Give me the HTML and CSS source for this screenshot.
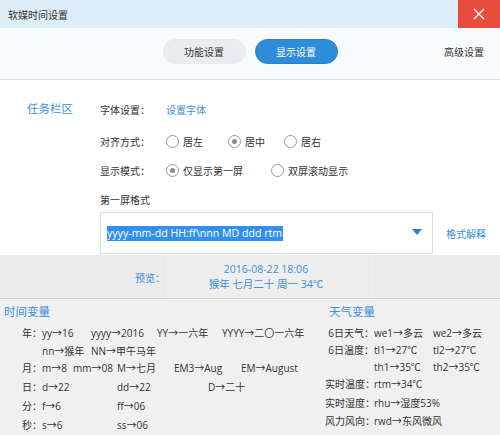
FILE: index.html
```html
<!DOCTYPE html>
<html lang="zh-CN">
<head>
<meta charset="utf-8">
<title>软媒时间设置</title>
<link rel="stylesheet" href="styles.css">
</head>
<body>
<div class="win">
  <header class="titlebar">
    <span class="title">软媒时间设置</span>
    <button class="close" aria-label="关闭">
      <svg width="12" height="12" viewBox="0 0 12 12"><path d="M1 1L11 11M11 1L1 11" stroke="#fff" stroke-width="1.3" fill="none"/></svg>
    </button>
  </header>

  <nav class="tabs">
    <div class="tabs-spacer"></div>
    <div class="pills">
      <span class="pill">功能设置</span>
      <span class="pill active">显示设置</span>
    </div>
    <div class="tabs-right"><span class="tab-text">高级设置</span></div>
  </nav>

  <section class="main">
    <div class="side">任务栏区</div>
    <div class="form">
      <div class="row r1">
        <span class="label">字体设置：</span>
        <span class="link">设置字体</span>
      </div>
      <div class="row r2">
        <span class="label">对齐方式：</span>
        <span class="opt o62"><i class="radio"></i>居左</span>
        <span class="opt o56"><i class="radio on"></i>居中</span>
        <span class="opt"><i class="radio"></i>居右</span>
      </div>
      <div class="row r3">
        <span class="label">显示模式：</span>
        <span class="opt o105"><i class="radio on"></i>仅显示第一屏</span>
        <span class="opt"><i class="radio"></i>双屏滚动显示</span>
      </div>
      <div class="row r4">
        <span class="label">第一屏格式</span>
      </div>
      <div class="fmt-row">
        <div class="select">
          <span class="sel-text">yyyy-mm-dd HH:ff\nnn MD ddd rtm</span>
          <svg class="caret" width="10" height="6" viewBox="0 0 10 6"><path d="M0 0H10L5 6Z" fill="#2b7fd1"/></svg>
        </div>
        <span class="link">格式解释</span>
      </div>
    </div>
  </section>

  <section class="preview">
    <div class="pv-label">预览：</div>
    <div class="pv-box">
      <div>2016-08-22 18:06</div>
      <div>猴年 七月二十 周一 34℃</div>
    </div>
  </section>

  <section class="vars">
    <div class="col time">
      <div class="vtitle">时间变量</div>
      <div class="vrow"><span class="vl">年：</span><span class="w49">yy→16</span><span class="w66">yyyy→2016</span><span class="w65">YY→一六年</span><span>YYYY→二〇一六年</span></div>
      <div class="vrow short"><span class="vl"></span><span class="w49">nn→猴年</span><span>NN→甲午马年</span></div>
      <div class="vrow"><span class="vl">月：</span><span class="w31">m→8</span><span class="w44">mm→08</span><span class="w57">M→七月</span><span class="w67">EM3→Aug</span><span>EM→August</span></div>
      <div class="vrow"><span class="vl">日：</span><span class="w75">d→22</span><span class="w91">dd→22</span><span>D→二十</span></div>
      <div class="vrow"><span class="vl">分：</span><span class="w75">f→6</span><span>ff→06</span></div>
      <div class="vrow"><span class="vl">秒：</span><span class="w75">s→6</span><span>ss→06</span></div>
    </div>
    <div class="col weather">
      <div class="vtitle">天气变量</div>
      <div class="wrow first"><span class="wl">6日天气：</span><span class="w59">we1→多云</span><span>we2→多云</span></div>
      <div class="wrow tight"><span class="wl">6日温度：</span><span class="w59">tl1→27℃</span><span>tl2→27℃</span></div>
      <div class="wrow tight"><span class="wl"></span><span class="w59">th1→35℃</span><span>th2→35℃</span></div>
      <div class="wrow"><span class="wl">实时温度：</span><span>rtm→34℃</span></div>
      <div class="wrow"><span class="wl">实时湿度：</span><span>rhu→湿度53%</span></div>
      <div class="wrow"><span class="wl">风力风向：</span><span>rwd→东风微风</span></div>
    </div>
  </section>
</div>
</body>
</html>
```

FILE: styles.css
```css
* { box-sizing: border-box; }
html, body { margin: 0; padding: 0; }
body {
  width: 500px;
  height: 435px;
  overflow: hidden;
  font-family: "Segoe UI", "Open Sans", "Noto Sans CJK SC", sans-serif;
  font-size: 10px;
  color: #333;
  background: #fff;
}
.win { width: 500px; height: 435px; overflow: hidden; display: flex; flex-direction: column; }

.titlebar {
  height: 28px;
  flex: none;
  background: #deedf7;
  display: flex;
  align-items: center;
  justify-content: space-between;
}
.title { padding-left: 8px; color: #333; }
.close {
  width: 42px; height: 28px; border: 0; padding: 0;
  background: #e84c3d;
  display: flex; align-items: center; justify-content: center;
}

.tabs {
  height: 52px;
  flex: none;
  background: #f8fbfd;
  border-bottom: 1px solid #dde1e4;
  display: grid;
  grid-template-columns: 1fr auto 1fr;
  align-items: center;
}
.pills { display: flex; gap: 9px; padding-bottom: 4px; }
.pill {
  width: 83px; height: 25px;
  border-radius: 13px;
  background: #e8edf2;
  display: flex; align-items: center; justify-content: center;
  color: #333;
}
.pill.active { background: #2d8ddb; color: #fff; border: 1px solid #2a7fc4; }
.tabs-right { display: flex; justify-content: flex-end; padding-right: 16px; padding-bottom: 4px; }

.main { height: 175px; flex: none; display: flex; background: #fff; }
.side { width: 100px; padding: 19px 0 0 27px; line-height: 20px; color: #3a8fd8; font-size: 11.5px; }
.form { flex: 1; }
.row { height: 20px; display: flex; align-items: center; }
.r1 { margin-top: 19px; }
.r2 { margin-top: 12px; }
.r3 { margin-top: 9px; }
.r4 { margin-top: 9px; }
.label { width: 66px; flex: none; }
.link { color: #3a8fd8; }
.opt { display: flex; align-items: center; }
.o62 { width: 62px; }
.o56 { width: 56px; }
.o105 { width: 105px; }
.radio {
  width: 13px; height: 13px; border-radius: 50%;
  border: 1.5px solid #9a9a9a;
  margin-right: 4px;
  display: flex; align-items: center; justify-content: center;
  background: #fff;
}
.radio.on::after {
  content: ""; width: 5px; height: 5px; border-radius: 50%; background: #8a8a8a;
}

.fmt-row { margin-top: 3px; display: flex; align-items: center; gap: 13px; }
.select {
  width: 333px; height: 42px;
  border: 1px solid #dcdcdc;
  background: #fff;
  display: flex; align-items: center; justify-content: space-between;
  padding: 0 10px 0 6px;
}
.sel-text { background: #3290ea; color: #fff; line-height: 15px; padding-right: 1px; font-size: 10.6px; }
.caret { margin-top: -2px; }

.preview {
  height: 44px; flex: none;
  background: #ebebeb;
  border-bottom: 1px solid #d2d2d2;
  display: flex; align-items: stretch;
}
.pv-label { width: 167px; display: flex; align-items: center; justify-content: flex-end; padding-right: 2px; color: #3a8fd8; padding-top: 1px; }
.pv-box {
  width: 208px;
  background: #eeeeee;
  color: #3a8fd8;
  display: flex; flex-direction: column; align-items: center; justify-content: center;
  line-height: 15px; padding-right: 10px; font-size: 10.5px;
}

.vars { flex: 1; background: #f0f0f0; display: flex; }
.col.time { width: 325px; padding-top: 4px; }
.col.weather { flex: 1; padding-top: 4px; }
.vtitle { color: #3a8fd8; font-size: 11.5px; line-height: 18px; padding-left: 4px; margin-bottom: 2px; }
.vrow { display: flex; height: 19px; align-items: center; white-space: nowrap; }
.vrow.short { height: 16px; }
.vl { width: 42px; flex: none; text-align: right; }
.w31 { width: 31px; flex: none; }
.w44 { width: 44px; flex: none; }
.w49 { width: 49px; flex: none; }
.w57 { width: 57px; flex: none; }
.w59 { width: 59px; flex: none; }
.w65 { width: 65px; flex: none; }
.w66 { width: 66px; flex: none; }
.w67 { width: 67px; flex: none; }
.w75 { width: 75px; flex: none; }
.w91 { width: 91px; flex: none; }

.wrow { display: flex; height: 18.5px; align-items: center; white-space: nowrap; }
.wrow.first { margin-top: 2px; }
.wrow.tight { height: 16.5px; }
.wl { width: 49px; flex: none; text-align: right; }
```
